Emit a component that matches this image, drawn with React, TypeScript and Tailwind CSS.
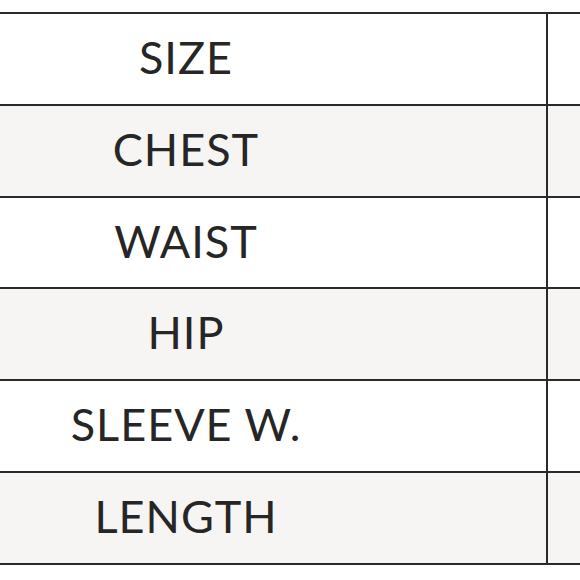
import React from "react";

const rows = [
  { label: "SIZE", h: "h-[92px]", bg: "bg-white" },
  { label: "CHEST", h: "h-[92px]", bg: "bg-[#f6f5f3]" },
  { label: "WAIST", h: "h-[91px]", bg: "bg-white" },
  { label: "HIP", h: "h-[92px]", bg: "bg-[#f6f5f3]" },
  { label: "SLEEVE W.", h: "h-[92px]", bg: "bg-white" },
  { label: "LENGTH", h: "h-[92px]", bg: "bg-[#f6f5f3]" },
];

export default function App() {
  return (
    <div className="w-[580px] h-[580px] bg-white overflow-hidden pt-[12px]">
      <div className="flex flex-col border-b-2 border-[#2a2a2a] w-[580px]">
        {rows.map((r) => (
          <div key={r.label} className={`flex border-t-2 border-[#2a2a2a] ${r.bg} ${r.h}`}>
            <div className="w-[548px] shrink-0 pr-[174px] pb-[3px] flex items-center justify-center border-r-2 border-[#2a2a2a]">
              <span
                className="text-[45px] leading-none font-normal text-[#262626] tracking-[1px]"
                style={{ fontFamily: "Lato, 'Noto Sans', sans-serif" }}
              >
                {r.label}
              </span>
            </div>
            <div className="flex-1" />
          </div>
        ))}
      </div>
    </div>
  );
}
